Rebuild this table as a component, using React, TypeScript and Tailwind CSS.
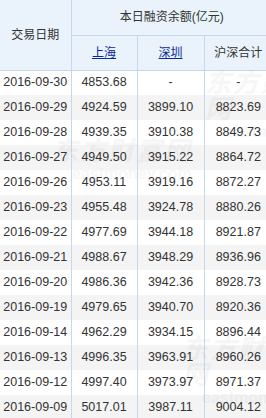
const rows: [string, string, string, string][] = [
  ["2016-09-30", "4853.68", "-", "-"],
  ["2016-09-29", "4924.59", "3899.10", "8823.69"],
  ["2016-09-28", "4939.35", "3910.38", "8849.73"],
  ["2016-09-27", "4949.50", "3915.22", "8864.72"],
  ["2016-09-26", "4953.11", "3919.16", "8872.27"],
  ["2016-09-23", "4955.48", "3924.78", "8880.26"],
  ["2016-09-22", "4977.69", "3944.18", "8921.87"],
  ["2016-09-21", "4988.67", "3948.29", "8936.96"],
  ["2016-09-20", "4986.36", "3942.36", "8928.73"],
  ["2016-09-19", "4979.65", "3940.70", "8920.36"],
  ["2016-09-14", "4962.29", "3934.15", "8896.44"],
  ["2016-09-13", "4996.35", "3963.91", "8960.26"],
  ["2016-09-12", "4997.40", "3973.97", "8971.37"],
  ["2016-09-09", "5017.01", "3987.11", "9004.12"],
];

const font = { fontFamily: '"Liberation Sans", "Noto Sans CJK SC", sans-serif' };

// faint background watermark, sits over the table like the original
function Watermark({ className }: { className: string }) {
  return (
    <div
      aria-hidden
      className={`absolute pointer-events-none select-none text-black opacity-[0.03] leading-none ${className}`}
    >
      <div className="text-[26px] font-bold italic tracking-[2px]">东方财富网</div>
      <div className="text-[16px] font-bold mt-[2px] ml-[20px]">eastmoney.com</div>
    </div>
  );
}

export default function App() {
  return (
    <div className="relative w-[266px] h-[418px] overflow-hidden bg-white text-[#333] text-[12px]" style={font}>
      <table className="border-collapse table-fixed w-[272px]">
        <colgroup>
          <col className="w-[71px]" />
          <col className="w-[66px]" />
          <col className="w-[67px]" />
          <col className="w-[68px]" />
        </colgroup>
        <thead className="bg-[#eaf3fb]">
          <tr className="h-[35px]">
            <th rowSpan={2} className="font-normal border-r border-[#c6d9ec]">
              交易日期
            </th>
            <th colSpan={3} className="font-normal border-b border-[#c6d9ec]">
              本日融资余额(亿元)
            </th>
          </tr>
          <tr className="h-[35px]">
            <th className="font-normal border-r border-[#c6d9ec]">
              <a className="text-[#0b2a9a] underline">上海</a>
            </th>
            <th className="font-normal border-r border-[#c6d9ec]">
              <a className="text-[#0b2a9a] underline">深圳</a>
            </th>
            <th className="font-normal">沪深合计</th>
          </tr>
        </thead>
        <tbody className="border-t border-[#c6d9ec] text-[12.5px]">
          {rows.map((r, i) => (
            <tr key={r[0]} className={`h-[25px] ${i % 2 ? "bg-[#f4f4f4]" : "bg-white"}`}>
              {r.map((c, j) => (
                <td key={j} className={`text-center p-0 ${j < 3 ? "border-r border-[#c6d9ec]" : ""}`}>
                  {c}
                </td>
              ))}
            </tr>
          ))}
        </tbody>
      </table>
      <Watermark className="left-[205px] top-[70px]" />
      <Watermark className="left-[52px] top-[138px]" />
      <Watermark className="left-[182px] top-[336px]" />
    </div>
  );
}
